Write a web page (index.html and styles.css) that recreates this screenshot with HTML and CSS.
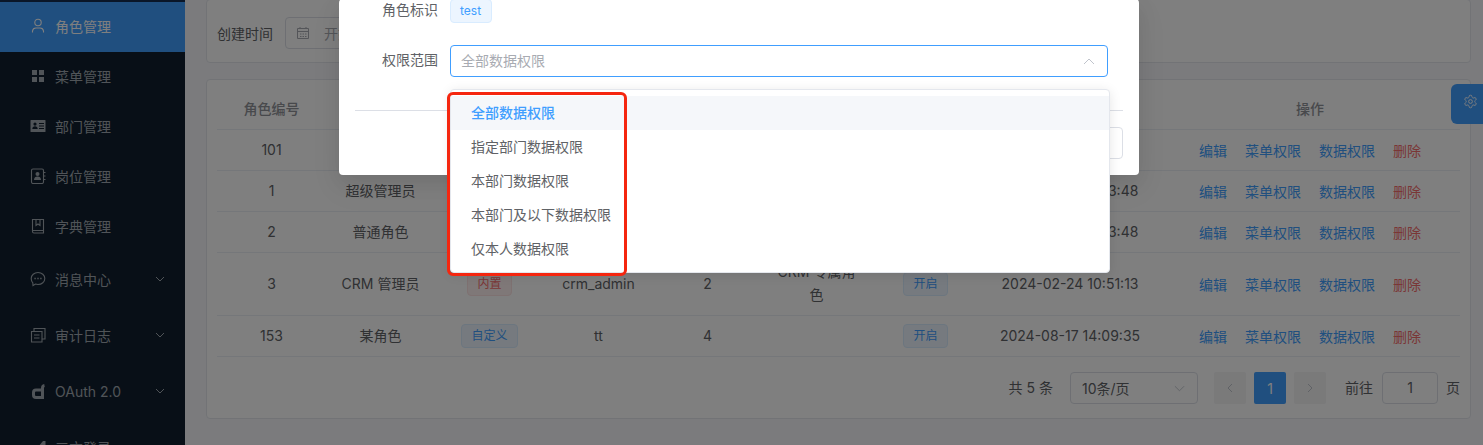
FILE: index.html
```html
<!DOCTYPE html>
<html lang="zh-CN">
<head>
<meta charset="utf-8">
<title>角色管理</title>
<link rel="stylesheet" href="styles.css">
</head>
<body>
<div class="app">
  <aside class="sidebar">
    <div class="nav-item active"><svg class="nav-icon" viewBox="0 0 16 16"><circle class="ln" cx="8" cy="4.5" r="3.2"/><path class="ln" d="M2.5 14.500v-1.500a3.500 3.500 0 0 1 3.500-3h4a3.500 3.500 0 0 1 3.500 3v1.500"/></svg><span>角色管理</span></div>
    <div class="nav-item"><svg class="nav-icon" viewBox="0 0 16 16"><path class="fl" d="M2 2h5v5H2zM9 2h5v5H9zM2 9h5v5H2zM9 9h5v5H9z"/></svg><span>菜单管理</span></div>
    <div class="nav-item"><svg class="nav-icon" viewBox="0 0 16 16"><path class="fl" fill-rule="evenodd" d="M1 2h14a.500.500 0 0 1 .500.500v11a.500.500 0 0 1-.500.500H1a.500.500 0 0 1-.500-.500v-11A.500.500 0 0 1 1 2zM5 4.500a1.600 1.600 0 1 0 0 3.200 1.600 1.600 0 0 0 0-3.200zM2.300 11h5.400c0-1.800-1.200-2.700-2.700-2.700S2.300 9.200 2.300 11zM9 5v1h5V5zM9 7.500v1h5v-1zM9 10v1h5v-1z"/></svg><span>部门管理</span></div>
    <div class="nav-item"><svg class="nav-icon" viewBox="0 0 16 16"><rect class="ln" x="1.500" y="1" width="12" height="14.500" rx="1.500"/><circle class="fl" cx="7.500" cy="6" r="2"/><path class="fl" d="M4 12c0-2.500 1.500-3.500 3.500-3.500S11 9.500 11 12z"/><path class="ln" d="M14 4.500h1.500M14 8h1.500M14 11.500h1.500"/></svg><span>岗位管理</span></div>
    <div class="nav-item"><svg class="nav-icon" viewBox="0 0 16 16"><path class="ln" d="M2.500 12V1.500h11V15H4a1.500 1.500 0 0 1-1.500-1.500zM2.500 12.500h11M6 1.500v6l2-1.500 2 1.500v-6"/></svg><span>字典管理</span></div>
    <div class="nav-item tall"><svg class="nav-icon" viewBox="0 0 16 16"><path class="ln" d="M8 1.500c3.800 0 6.800 2.700 6.800 6s-3 6-6.800 6c-.9 0-1.700-.1-2.500-.4L3 14.500l-.2-2.700C1.800 10.700 1.200 9.200 1.200 7.500c0-3.300 3-6 6.800-6z"/><path class="fl" d="M4.400 6.800h1.400v1.400H4.400zM7.300 6.800h1.400v1.400H7.300zM10.200 6.800h1.400v1.400h-1.400z"/></svg><span>消息中心</span><svg class="chev" viewBox="0 0 10 6"><path d="M1 1l4 4 4-4"/></svg></div>
    <div class="nav-item tall"><svg class="nav-icon" viewBox="0 0 16 16"><path class="ln" d="M1.500 4.500h10.500v10.500H1.500zM4 4.500V1.500h11v10.500h-3M4 8h5.500M4 11h5.500"/></svg><span>审计日志</span><svg class="chev" viewBox="0 0 10 6"><path d="M1 1l4 4 4-4"/></svg></div>
    <div class="nav-item tall"><svg class="nav-icon" viewBox="0 0 16 16"><path class="oauth" d="M14.500 2.500c-1.500.3-2 1-2 2.500v9.500H6A2.500 2.500 0 0 1 3.500 12V9.500A2.500 2.500 0 0 1 6 7h6.500"/></svg><span>OAuth 2.0</span><svg class="chev" viewBox="0 0 10 6"><path d="M1 1l4 4 4-4"/></svg></div>
    <div class="nav-item tall"><svg class="nav-icon" viewBox="0 0 16 16"><path class="fl" d="M8 8l5-6h2.500v5L10 13z"/></svg><span>三方登录</span></div>
  </aside>

  <main class="main">
    <section class="card search-card">
      <label class="search-label">创建时间</label>
      <div class="date-range">
        <svg class="cal" viewBox="0 0 14 14"><path d="M1.500 2.500h11v10h-11zM1.500 5.500h11M4 1v2M10 1v2M4 8h1.500M6.500 8H8M9 8h1.500M4 10.500h1.500M6.500 10.500H8M9 10.500h1.500"/></svg>
        <span>开始日期</span><span>-</span><span>结束日期</span>
      </div>
    </section>

    <section class="card table-card">
      <table class="roles">
        <colgroup>
          <col class="c1"><col class="c1"><col class="c1"><col class="c1"><col class="c1"><col class="c1"><col class="c1"><col class="c8"><col class="c9">
        </colgroup>
        <thead>
          <tr><th>角色编号</th><th>角色名称</th><th>角色类型</th><th>角色标识</th><th>显示顺序</th><th>备注</th><th>状态</th><th>创建时间</th><th>操作</th></tr>
        </thead>
        <tbody>
          <tr><td>101</td><td>测试账号</td><td><span class="tag tag-blue">自定义</span></td><td>test</td><td>0</td><td>132</td><td><span class="tag tag-blue">开启</span></td><td>2021-01-06 13:49:35</td><td class="actions"><a>编辑</a><a>菜单权限</a><a>数据权限</a><a class="del">删除</a></td></tr>
          <tr><td>1</td><td>超级管理员</td><td><span class="tag tag-red">内置</span></td><td>super_admin</td><td>1</td><td>超级管理员</td><td><span class="tag tag-blue">开启</span></td><td>2021-01-05 17:03:48</td><td class="actions"><a>编辑</a><a>菜单权限</a><a>数据权限</a><a class="del">删除</a></td></tr>
          <tr><td>2</td><td>普通角色</td><td><span class="tag tag-red">内置</span></td><td>common</td><td>2</td><td>普通角色</td><td><span class="tag tag-blue">开启</span></td><td>2021-01-05 17:03:48</td><td class="actions"><a>编辑</a><a>菜单权限</a><a>数据权限</a><a class="del">删除</a></td></tr>
          <tr class="tall-row"><td>3</td><td>CRM 管理员</td><td><span class="tag tag-red">内置</span></td><td>crm_admin</td><td>2</td><td>CRM 专属角色</td><td><span class="tag tag-blue">开启</span></td><td>2024-02-24 10:51:13</td><td class="actions"><a>编辑</a><a>菜单权限</a><a>数据权限</a><a class="del">删除</a></td></tr>
          <tr><td>153</td><td>某角色</td><td><span class="tag tag-blue">自定义</span></td><td>tt</td><td>4</td><td></td><td><span class="tag tag-blue">开启</span></td><td>2024-08-17 14:09:35</td><td class="actions"><a>编辑</a><a>菜单权限</a><a>数据权限</a><a class="del">删除</a></td></tr>
        </tbody>
      </table>
      <div class="pager">
        <span class="total">共 5 条</span>
        <div class="page-size"><span>10条/页</span><svg class="chev-lg" viewBox="0 0 12 7"><path d="M1 1l5 5 5-5"/></svg></div>
        <div class="pages">
          <button class="page-btn"><svg viewBox="0 0 6 10"><path d="M5 1L1 5l4 4"/></svg></button>
          <button class="page-btn current">1</button>
          <button class="page-btn"><svg viewBox="0 0 6 10"><path d="M1 1l4 4-4 4"/></svg></button>
        </div>
        <span class="goto">前往</span>
        <div class="goto-input">1</div>
        <span class="unit">页</span>
      </div>
    </section>
  </main>

  <div class="settings-tab"><svg viewBox="0 0 24 24"><path d="M12.220 2h-.44a2 2 0 0 0-2 2v.18a2 2 0 0 1-1 1.730l-.43.250a2 2 0 0 1-2 0l-.15-.08a2 2 0 0 0-2.730.730l-.22.380a2 2 0 0 0 .730 2.730l.15.100a2 2 0 0 1 1 1.720v.510a2 2 0 0 1-1 1.740l-.15.090a2 2 0 0 0-.730 2.730l.22.380a2 2 0 0 0 2.730.730l.15-.08a2 2 0 0 1 2 0l.43.250a2 2 0 0 1 1 1.730V20a2 2 0 0 0 2 2h.44a2 2 0 0 0 2-2v-.18a2 2 0 0 1 1-1.730l.43-.25a2 2 0 0 1 2 0l.15.080a2 2 0 0 0 2.730-.730l.22-.39a2 2 0 0 0-.730-2.730l-.15-.08a2 2 0 0 1-1-1.740v-.5a2 2 0 0 1 1-1.740l.15-.09a2 2 0 0 0 .730-2.730l-.22-.38a2 2 0 0 0-2.730-.730l-.15.080a2 2 0 0 1-2 0l-.43-.25a2 2 0 0 1-1-1.730V4a2 2 0 0 0-2-2z"/><circle cx="12" cy="12" r="3"/></svg></div>

  <div class="overlay">
    <div class="modal">
      <div class="form-row">
        <span class="form-label">角色标识</span>
        <span class="tag tag-light">test</span>
      </div>
      <div class="form-row second">
        <span class="form-label">权限范围</span>
        <div class="select">
          <span class="placeholder">全部数据权限</span>
          <svg class="chev-up" viewBox="0 0 12 7"><path d="M1 6l5-5 5 5"/></svg>
          <div class="dropdown">
            <ul class="options">
              <li class="selected">全部数据权限</li>
              <li>指定部门数据权限</li>
              <li>本部门数据权限</li>
              <li>本部门及以下数据权限</li>
              <li>仅本人数据权限</li>
            </ul>
            <div class="annotation"></div>
          </div>
        </div>
      </div>
      <div class="divider"></div>
      <div class="footer">
        <button class="btn btn-primary">确 定</button>
        <button class="btn">取 消</button>
      </div>
    </div>
  </div>
</div>
</body>
</html>
```

FILE: styles.css
```css
* { box-sizing: border-box; }
html, body { margin: 0; height: 100%; }
body {
  font-family: Inter, "Noto Sans CJK SC", "Liberation Sans", sans-serif;
  font-size: 14px;
  color: #606266;
  overflow: hidden;
}
.app {
  position: relative;
  display: flex;
  width: 1483px;
  height: 445px;
  overflow: hidden;
  background: #f6f7fb;
}

/* sidebar */
.sidebar {
  flex: 0 0 185px;
  background: #111f2e;
  border-top: 2px solid #142c50;
  color: #a0a8b0;
  overflow: hidden;
}
.nav-item {
  display: flex;
  align-items: center;
  height: 50px;
  padding-left: 30px;
  padding-bottom: 2px;
  gap: 9px;
  flex-shrink: 0;
}
.nav-item.tall { height: 56px; }
.nav-item.active { background: #409eff; color: #fff; }
.nav-icon { width: 16px; height: 16px; flex: none; }
.ln { fill: none; stroke: currentColor; stroke-width: 1.1; }
.fl { fill: currentColor; }
.oauth { fill: none; stroke: currentColor; stroke-width: 3; }
.chev { width: 10px; height: 6px; margin-left: auto; margin-right: 20px; fill: none; stroke: currentColor; stroke-width: 1; }

/* main */
.main {
  flex: 1;
  min-width: 0;
  padding: 0 12px 0 21px;
}
.card {
  background: #fff;
  border: 1px solid #e4e7ed;
  border-radius: 4px;
}
.search-card {
  display: flex;
  align-items: center;
  height: 64px;
  margin-top: -1px;
  padding: 3px 10px 0;
  gap: 12px;
}
.search-label { width: 56px; }
.date-range {
  display: flex;
  align-items: center;
  gap: 14px;
  width: 350px;
  height: 32px;
  padding: 0 10px;
  border: 1px solid #dcdfe6;
  border-radius: 4px;
  color: #a8abb2;
}
.cal { flex: none; width: 14px; height: 14px; fill: none; stroke: #a8abb2; stroke-width: 1; }
.table-card {
  margin-top: 16px;
  height: 340px;
  padding: 0 10px;
}
.roles {
  width: 1243px;
  table-layout: fixed;
  border-collapse: separate;
  border-spacing: 0;
}
.c1 { width: 109px; }
.c8 { width: 180px; }
.c9 { width: 300px; }
.roles th, .roles td {
  box-sizing: border-box;
  height: 41px;
  padding: 0 12px 2px;
  text-align: center;
  font-weight: 400;
  border-bottom: 1px solid #ebeef5;
  line-height: 23px;
}
.roles th { height: 50px; color: #909399; font-weight: 500; padding-top: 10px; }
.roles .tall-row td { height: 63px; }
.roles td.actions { white-space: nowrap; padding: 0; }
.actions a { color: #409eff; }
.actions a + a { margin-left: 18px; }
.actions a.del { color: #f56c6c; }
.tag {
  display: inline-block;
  height: 24px;
  padding: 0 9px;
  border: 1px solid;
  border-radius: 4px;
  font-size: 12px;
  line-height: 22px;
  vertical-align: middle;
}
.tag-blue { color: #409eff; background: #ecf5ff; border-color: #d9ecff; }
.tag-red { color: #f56c6c; background: #fef0f0; border-color: #fde2e2; }
.tag-light { color: #409eff; background: #ecf5ff; border-color: #d9ecff; }

/* pagination */
.pager {
  display: flex;
  align-items: center;
  justify-content: flex-end;
  height: 32px;
  margin-top: 15px;
}
.total { margin-right: 17px; padding-bottom: 2px; }
.page-size {
  display: flex;
  align-items: center;
  justify-content: space-between;
  width: 128px;
  height: 32px;
  padding: 0 12px 0 11px;
  border: 1px solid #dcdfe6;
  border-radius: 4px;
}
.chev-lg { width: 11px; height: 7px; fill: none; stroke: #c0c4cc; stroke-width: 1; }
.pages { display: flex; gap: 8px; margin-left: 16px; }
.page-btn {
  display: flex;
  align-items: center;
  justify-content: center;
  width: 32px;
  height: 32px;
  padding: 0;
  border: 0;
  border-radius: 2px;
  background: #f4f4f5;
  color: #606266;
  font: inherit;
}
.page-btn svg { width: 6px; height: 10px; fill: none; stroke: #c0c4cc; stroke-width: 1; }
.page-btn.current { background: #409eff; color: #fff; }
.goto { margin-left: 19px; margin-right: 9px; padding-bottom: 2px; }
.unit { padding-bottom: 2px; }
.goto-input {
  width: 56px;
  height: 32px;
  margin-right: 8px;
  border: 1px solid #dcdfe6;
  border-radius: 4px;
  text-align: center;
  line-height: 30px;
}

/* settings tab */
.settings-tab {
  position: absolute;
  right: 0;
  top: 84px;
  width: 32px;
  height: 40px;
  padding: 10px 0 0 12px;
  border-radius: 6px 0 0 6px;
  background: #409eff;
}
.settings-tab svg { display: block; width: 15px; height: 15px; fill: none; stroke: #fff; stroke-width: 1.600; }

/* modal */
.overlay {
  position: absolute;
  inset: 0;
  display: flex;
  justify-content: center;
  align-items: flex-start;
  background: rgba(0, 0, 0, .5);
}
.modal {
  width: 800px;
  margin-top: -1px;
  margin-left: -5px;
  padding: 0 16px 16px;
  background: #fff;
  border-radius: 4px;
  box-shadow: 0 12px 32px 4px rgba(0, 0, 0, .04), 0 8px 20px rgba(0, 0, 0, .08);
}
.form-row {
  display: flex;
  align-items: center;
  padding-right: 15px;
}
.form-row.second { margin-top: 22px; }
.form-label {
  flex: 0 0 83px;
  height: 24px;
  margin-right: 12px;
  text-align: right;
  line-height: 22px;
}
.tag-light { padding: 0 10px 0 9px; }
.select {
  position: relative;
  flex: 1;
  display: flex;
  align-items: center;
  justify-content: space-between;
  height: 32px;
  padding: 0 12px 2px 10px;
  border: 1px solid #409eff;
  border-radius: 4px;
}
.placeholder { color: #a8abb2; }
.chev-up { width: 12px; height: 7px; margin-top: 2px; fill: none; stroke: #c0c4cc; stroke-width: 1; }
.dropdown {
  position: absolute;
  left: -1px;
  top: 43px;
  width: 660px;
  padding: 6px 0;
  background: #fff;
  border: 1px solid #e4e7ed;
  border-radius: 4px;
  box-shadow: 0 2px 12px rgba(0, 0, 0, .1);
  z-index: 2;
}
.options { margin: 0; padding: 0; list-style: none; }
.options li {
  height: 34px;
  padding: 0 20px;
  line-height: 34px;
}
.options li.selected {
  background: #f5f7fa;
  color: #409eff;
  font-weight: 500;
}
.annotation {
  position: absolute;
  left: -4px;
  top: 2px;
  width: 180px;
  height: 184px;
  border: 3px solid #f5260f;
  border-radius: 6px;
  pointer-events: none;
}
.divider {
  height: 1px;
  margin-top: 33px;
  background: #dcdfe6;
}
.footer {
  display: flex;
  justify-content: flex-end;
  gap: 12px;
  margin-top: 16px;
}
.btn {
  width: 64px;
  height: 32px;
  padding: 0;
  border: 1px solid #dcdfe6;
  border-radius: 4px;
  background: #fff;
  color: #606266;
  font: inherit;
}
.btn-primary { background: #409eff; border-color: #409eff; color: #fff; }
```
